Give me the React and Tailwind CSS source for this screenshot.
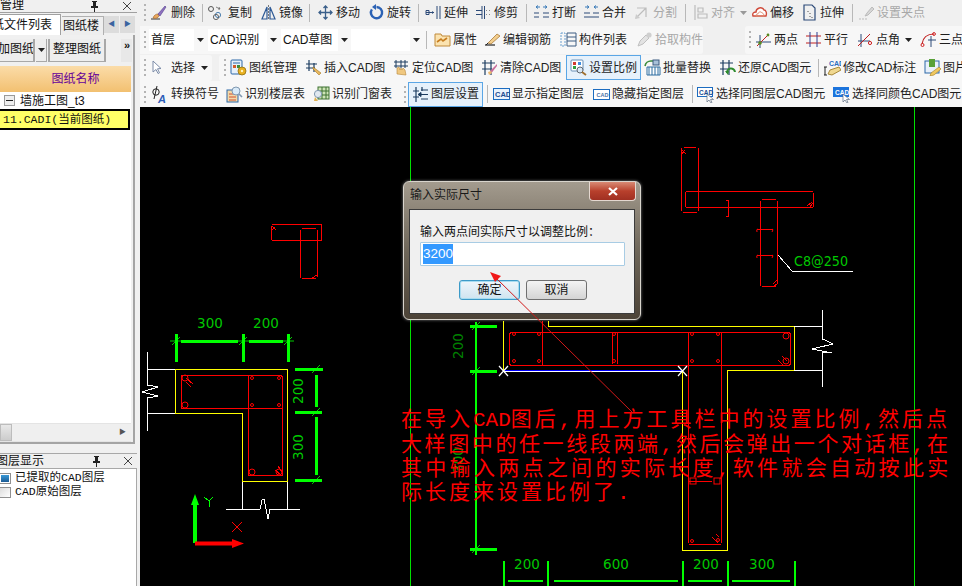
import React from "react";

const S = ({ children }) => (
  <svg width="17" height="17" viewBox="0 0 17 17" fill="none" className="shrink-0">{children}</svg>
);

const ICONS = {
  del: <S><path d="M1 15h9" stroke="#333" /><path d="M3 14c1-3 3-4 5-4l1 2c-1 2-3 3-6 2z" fill="#e8a860" stroke="#a06020" strokeWidth=".6" /><path d="M8 10l7-8 1 1-6 9z" fill="#8f6fc0" stroke="#50408a" strokeWidth=".6" /></S>,
  copy: <S><circle cx="4" cy="5" r="2.5" stroke="#555" /><circle cx="11" cy="11" r="2.6" stroke="#4a7fb0" /><circle cx="9" cy="13" r="2.6" stroke="#666" /><path d="M9 3l4 2M13 5l-2 0M13 5l-1-2" stroke="#666" strokeWidth=".8" /></S>,
  mirror: <S><path d="M7 3L2 15h5zM10 3l5 12h-5z" stroke="#2e5a96" strokeWidth="1.2" /><path d="M8.5 1v15" stroke="#777" strokeDasharray="2 1" /></S>,
  move: <S><path d="M8.5 2v13M2 8.5h13M6.5 4l2-2 2 2M6.5 13l2 2 2-2M4 6.5l-2 2 2 2M13 6.5l2 2-2 2" stroke="#3a5f8a" strokeWidth="1.3" /></S>,
  rotate: <S><path d="M8.5 3a5.6 5.6 0 1 1-4.600 2.400" stroke="#2c62b4" strokeWidth="2.400" /><path d="M8 0v6L4 3z" fill="#2c62b4" /></S>,
  extend: <S><path d="M1 8.5h8M1 6.5h3v4H1z" stroke="#2c4a78" /><path d="M12 2v13M15 2v13" stroke="#2c4a78" /><path d="M9 8.5l-2-1.500v3z" fill="#2c4a78" /></S>,
  trim: <S><path d="M7 2v13M9.5 2v13" stroke="#2c4a78" /><path d="M1 6.5h6M1 10.500h6" stroke="#2c4a78" /><path d="M11 6.5h1M14 6.5h1M11 10.500h1M14 10.500h1" stroke="#888" /></S>,
  breakI: <S><path d="M1 13h5M10 13h6M1 9h5M10 9h6" stroke="#2c4a78" /><path d="M3 3h4M3 3l2-1.500M3 3l2 1.500M14 3h-4M14 3l-2-1.500M14 3l-2 1.500" stroke="#3a7ab8" /></S>,
  merge: <S><path d="M1 13h15M1 9h6M10 9h6" stroke="#2c4a78" /><path d="M2 3h4M6 3L4 1.500M6 3L4 4.500M15 3h-4M11 3l2-1.500M11 3l2 1.500" stroke="#3a7ab8" /></S>,
  split: <S><path d="M2 14L12 4M3 4h9v9" stroke="#bdbdbd" strokeWidth="1.2" /><path d="M1 15l5-1-4-4z" fill="#ccc" /></S>,
  align: <S><path d="M3 1v15M6 4h5v4H6zM6 10h9v4H6z" stroke="#bcbcbc" strokeWidth="1.2" /></S>,
  offset: <S><path d="M2 12c-1-3 1-4 3-4 0-4 6-6 8-2 2 0 3 3 2 6z" stroke="#cf4a3a" strokeWidth="1.400" fill="#fff" /><path d="M5 12c0-2 1-2 2-2 0-2 3-3 4-1 1 0 2 1 2 3z" stroke="#e08a70" /></S>,
  stretch: <S><path d="M3 1h8l3 3v12H3z" stroke="#2c4a78" strokeWidth="1.2" /><path d="M7 7v1M9 9v1M9 12v1M11 13v1" stroke="#555" /></S>,
  grip: <S><path d="M1 15h8" stroke="#bbb" strokeDasharray="2 1" /><path d="M9 9l5-6 2 2-6 6-3 1z" fill="#d6d6d6" stroke="#bbb" /></S>,
  attr: <S><path d="M1 3h6l1 2h8v10H1z" fill="#fbe3b0" stroke="#c08a3a" /><path d="M3 11l4-3 2 2 4-3" stroke="#c77d20" strokeWidth="1.600" /></S>,
  rebar: <S><path d="M1 14h10" stroke="#222" strokeWidth="1.2" /><path d="M4 12L13 3l3 2-9 8z" fill="#f3ce8d" stroke="#a06e2a" strokeWidth=".7" /><path d="M2 14l2-2" stroke="#222" /></S>,
  list: <S><rect x="1" y="2" width="4" height="13" fill="none" stroke="#6aa0d0" strokeDasharray="2 1" /><path d="M7 2h9v13H7zM7 6h9M7 10h9" stroke="#3c5c82" /></S>,
  pick: <S><path d="M2 15l2-5 6-6 3 3-6 6z" fill="#e3e3e3" stroke="#c0c0c0" /><circle cx="13" cy="4" r="2.600" fill="#cfcfcf" /></S>,
  two: <S><path d="M1 11h15M5 4v13" stroke="#2c4a78" /><path d="M2 15L14 3" stroke="#c02020" /><circle cx="5" cy="12" r="1.800" fill="#5a8a20" /><circle cx="13" cy="4" r="1.400" fill="#5a8a20" /></S>,
  par: <S><path d="M1 5h15M1 12h15" stroke="#c02020" /><path d="M5 1v15M12 1v15" stroke="#2c3c90" /></S>,
  ang: <S><path d="M1 10h12M4 3v13" stroke="#2c4a78" /><path d="M1 15L13 3" stroke="#c02020" /><circle cx="13" cy="12" r="1.600" fill="none" stroke="#d02020" /></S>,
  three: <S><path d="M2 13C3 6 8 3 14 3" stroke="#c02020" strokeWidth="1.2" /><path d="M8 9h8M11 5v11" stroke="#2c4a78" /><circle cx="2.500" cy="14" r="1.500" stroke="#d02020" /><circle cx="14" cy="3" r="1.400" stroke="#d02020" /></S>,
  mgmt: <S><rect x="1" y="1" width="11" height="14" rx="1" fill="#e6f0fa" stroke="#2c68a8" /><path d="M3 4h7" stroke="#2c68a8" /><rect x="3" y="6" width="3" height="3" fill="#d25c2c" /><rect x="7" y="6" width="3" height="3" fill="#3c8c3c" /><circle cx="12" cy="12" r="4" fill="#e8b020" stroke="#907010" strokeWidth=".8" /><circle cx="12" cy="12" r="1.2" fill="#fff3c0" /></S>,
  ins: <S><path d="M4 1v11M9 4v9M1 5h11M1 9h9" stroke="#1c3c60" strokeWidth="1.2" /><path d="M8 8l8 6-2 2-6-6z" fill="#e8b860" stroke="#a87820" strokeWidth=".6" /></S>,
  loc: <S><path d="M3 1v8M8 1v8M12 1v8M1 3h14M1 7h14" stroke="#1c3c60" /><path d="M4 15V9l2-1 1 3 1-2 1 2 1-2 2 2 1 5z" fill="#f0c880" stroke="#b8883a" strokeWidth=".6" /></S>,
  clr: <S><path d="M4 1v15M10 1v15M1 4h13M1 10h10" stroke="#1c3c60" strokeWidth="1.2" /><path d="M16 5L9 12l1.500 2L16 7z" fill="#c86e9c" /><path d="M7 13l3-1 1 2-3 2z" fill="#eab870" /></S>,
  scale: <S><rect x="1" y="1" width="12" height="11" rx="1" fill="#fff" stroke="#6890b8" /><rect x="3" y="3" width="3" height="3" fill="#d23c30" /><rect x="8" y="3" width="3" height="3" fill="#3c8ce0" /><rect x="3" y="7" width="3" height="3" fill="#30a040" /><circle cx="10" cy="11" r="3" fill="#d8e8f6" stroke="#606870" /><path d="M12 13l4 3" stroke="#a07030" strokeWidth="1.800" /></S>,
  rep: <S><path d="M1 7a6 6 0 0 1 6-5h3" stroke="#3c8c3c" strokeWidth="1.600" /><path d="M3 8h13v8H3z" fill="#fff" stroke="#2c6ca0" /><path d="M5 8v8M8 8v8M11 8v8M14 8v8" stroke="#2c6ca0" /><rect x="9" y="1" width="6" height="5" fill="#a8c0d8" stroke="#3c5c82" /></S>,
  res: <S><path d="M4 1v15M10 1v15M1 4h13M1 10h10" stroke="#1c3c60" strokeWidth="1.2" /><path d="M8 14a4 4 0 0 1 8-1" stroke="#2e8c2e" strokeWidth="2" /><path d="M6 12l4 0-1 4z" fill="#2e8c2e" /></S>,
  mod: <S><text x="5" y="6.500" fontSize="7" fontWeight="700" fill="#2c6cc0" fontFamily="Liberation Sans">CAD</text><path d="M1 8v8M0 8h3M0 16h3" stroke="#222" /><path d="M4 15l2-4 9-3 2 3-9 5z" fill="#f0d890" stroke="#a88838" /></S>,
  img: <S><rect x="1" y="2" width="14" height="12" fill="#e8f0fa" stroke="#2c68a8" /><rect x="5" y="0" width="6" height="8" fill="#58a038" /><path d="M7 14l8-6 2 2-7 6-4 1z" fill="#f0c860" stroke="#a88020" strokeWidth=".6" /></S>,
  conv: <S><circle cx="6" cy="6" r="3.200" stroke="#222" /><path d="M7 0L4 13" stroke="#222" /><text x="8" y="16.500" fontSize="11" fontWeight="700" fontStyle="italic" fill="#2c5cb8" fontFamily="Liberation Sans">A</text></S>,
  floor: <S><rect x="1" y="4" width="11" height="12" fill="#f3d9a8" stroke="#2c68a8" /><path d="M3 8h7M3 11h7M3 14h7" stroke="#d05030" /><circle cx="10" cy="5" r="4" fill="#d8eaf8" stroke="#8098b0" /><path d="M13 8l3 3" stroke="#8098b0" strokeWidth="1.600" /></S>,
  door: <S><rect x="5" y="1" width="11" height="12" fill="#cfe5b8" stroke="#3c7030" /><path d="M5 5h11M5 9h11M9 1v12M13 1v12" stroke="#3c7030" /><circle cx="5" cy="8" r="3.600" fill="#e0e8f0" stroke="#8098b0" /><path d="M2 11l-1 4h4z" fill="#e0b050" /></S>,
  layer: <S><path d="M4 1v15M10 1v4M1 5h6M1 11h6" stroke="#1c3c60" strokeWidth="1.2" /><path d="M8 8.5h8M6 8.5l3-2v4z" fill="#1c3c60" stroke="#1c3c60" /><path d="M9 4h7M9 13h7" stroke="#1c3c60" /></S>,
  show: <S><rect x="0.500" y="2.500" width="16" height="11" fill="#e8f2fc" stroke="#1c6cc0" /><text x="2" y="11" fontSize="7.500" fontWeight="700" fill="#1c4c90" fontFamily="Liberation Sans">CAD</text></S>,
  hide: <S><rect x="0.500" y="3.500" width="16" height="10" fill="#fff" stroke="#1c6cc0" /><text x="3.500" y="10.500" fontSize="5.500" fontWeight="700" fill="#4c74a8" fontFamily="Liberation Sans">CAD</text></S>,
  same: <S><rect x="0.500" y="1.500" width="15" height="9" fill="#fff" stroke="#1c6cc0" /><text x="2" y="8.500" fontSize="6.500" fontWeight="700" fill="#1c4c90" fontFamily="Liberation Sans">CAD</text><path d="M10 8v8l2-2 2 3 1-.5-1.500-3h3z" fill="#fff" stroke="#5c6c80" strokeWidth=".7" /></S>,
  color: <S><rect x="0" y="1" width="16" height="10" fill="#1c74dc" /><text x="2" y="8.500" fontSize="6.500" fontWeight="700" fill="#fff" fontFamily="Liberation Sans">CAD</text><path d="M10 8v8l2-2 2 3 1-.5-1.500-3h3z" fill="#fff" stroke="#5c6c80" strokeWidth=".7" /></S>,
};

const Grip = () => (
  <div className="ml-[4px] w-[6px] h-[17px] flex flex-col justify-between shrink-0">
    <i className="block w-[2px] h-[2px] bg-[#b4b4b4]" />
    <i className="block w-[2px] h-[2px] bg-[#b4b4b4]" />
    <i className="block w-[2px] h-[2px] bg-[#b4b4b4]" />
    <i className="block w-[2px] h-[2px] bg-[#b4b4b4]" />
  </div>
);

const Sep = ({ w = "w-[5px]" }) => (
  <div className={`${w} h-[18px] shrink-0 flex`}>
    <i className="block w-px h-full bg-[#b8b8b8]" />
  </div>
);

const Caret = ({ c = "#222" }) => (
  <svg width="7" height="4" viewBox="0 0 7 4" className="shrink-0"><path d="M0 0h7L3.500 4z" fill={c} /></svg>
);

const Tool = ({ w, icon, label, gray, active, caret, wide }) => (
  <div className={`${w} shrink-0 h-full flex items-center`}>
    <div className={`flex items-center ${active ? "border border-[#5aa6e6] bg-[#e6f1fb] h-[25px] pl-[3px] pr-[3px] -ml-[4px]" : ""}`}>
      {ICONS[icon]}
      <span className={`${wide ? "ml-[4px]" : "ml-[2px]"} whitespace-nowrap ${gray ? "text-[#a8a8a8]" : "text-[#1e1e1e]"}`}>{label}</span>
      {caret && <span className="ml-[5px]"><Caret c={gray ? "#999" : "#222"} /></span>}
    </div>
  </div>
);

const Combo = ({ text, w, gap }) => (
  <div className={`flex items-center h-[22px] shrink-0 ${gap}`}>
    <div className={`${w} h-full bg-white pl-[2px] flex items-center whitespace-nowrap text-[#111]`}>{text}</div>
    <div className="w-[10px] h-full ml-[1px] flex items-center justify-center"><Caret /></div>
  </div>
);

const Pin = () => (
  <svg width="9" height="11" viewBox="0 0 9 11"><path d="M2 0h5v1H6v4h2v2H5v4H4V7H1V5h2V1H2z" fill="#222" /></svg>
);
const Close = () => (
  <svg width="8" height="8" viewBox="0 0 8 8"><path d="M0 0l8 8M8 0L0 8" stroke="#444" /></svg>
);

function LeftPanel() {
  return (
    <div className="w-[140px] h-[586px] shrink-0 bg-[#f0f0f0] flex flex-col overflow-hidden">
      <div className="w-[137px] h-[13px] flex items-center border-b border-[#a0a0a0] leading-[12px] text-[#111]">
        <span className="-mt-[2px]">管理</span>
        <div className="ml-auto mr-[24px] flex"><Pin /></div>
        <div className="mr-[6px] flex"><Close /></div>
      </div>
      <div className="h-[21px] mt-px flex items-end w-[137px]">
        <div className="w-[61px] h-[21px] bg-white border-t border-r border-[#a0a0a0] overflow-hidden leading-[20px] whitespace-nowrap text-[#111]">
          <span className="block -ml-[8px]">纸文件列表</span>
        </div>
        <div className="w-[42px] h-[19px] ml-px bg-[#eeeeee] border-t border-r border-[#b0b0b0] overflow-hidden leading-[18px] pl-px whitespace-nowrap text-[#111]">图纸楼</div>
        <div className="w-[15px] h-[17px] mb-[2px] bg-[#dcdcdc] flex items-center justify-center text-[7px] text-[#3a64a0]">◀</div>
        <div className="w-[15px] h-[17px] mb-[2px] ml-px bg-[#dcdcdc] flex items-center justify-center text-[7px] text-[#3a64a0]">▶</div>
      </div>
      <div className="w-[135px] h-[409px] border-r-2 border-b-2 border-[#a4a4a4] bg-[#f0f0f0] flex flex-col">
        <div className="h-[31px] shrink-0 flex items-start pt-[4px] pr-px">
          <div className="w-[35px] h-[23px] bg-[#eeeeee] border-r-2 border-b border-[#a8a8a8] overflow-hidden leading-[21px] whitespace-nowrap text-[#111]"><span className="block -ml-[2px]">加图纸</span></div>
          <div className="w-[11px] h-[23px] ml-px bg-[#eeeeee] border-r border-b border-[#a8a8a8] flex items-center justify-center"><Caret /></div>
          <div className="w-[58px] h-[23px] ml-px bg-[#eeeeee] border-x-2 border-b border-[#a8a8a8] text-center leading-[21px] whitespace-nowrap text-[#111]">整理图纸</div>
          <div className="w-[11px] h-[23px] ml-[15px] bg-[#e8e8e8] flex justify-center text-[11px] leading-[12px] font-bold tracking-[-1px] text-[#111]">»</div>
        </div>
        <div className="flex-1 bg-white flex flex-col mr-[2px]">
          <div className="h-[26px] shrink-0 bg-gradient-to-b from-[#fbdca8] to-[#f2c070] flex items-center justify-center text-[#660099] text-[12px] pl-[20px]">图纸名称</div>
          <div className="h-[17px] shrink-0 flex items-center whitespace-nowrap">
            <div className="w-[11px] h-[11px] ml-[4px] border border-[#9a9a9a] bg-[#eeeeee] flex items-center justify-center"><i className="block w-[7px] h-px bg-[#222]" /></div>
            <span className="ml-[5px] text-[#111]">墙施工图_t3</span>
          </div>
          <div className="h-[21px] shrink-0 w-[130px] border-y-2 border-r-2 border-black bg-[#ffff66] pl-[3px] flex items-center whitespace-nowrap text-[11.500px] text-[#111] [font-family:'Liberation_Mono','Noto_Sans_CJK_SC',monospace]">11.CADI(当前图纸)</div>
          <div className="flex-1" />
          <div className="h-[19px] shrink-0 bg-[#efefef] border-y border-[#e4e4e4] flex items-center">
            <div className="w-[12px] h-full bg-gradient-to-b from-[#e8e8e8] to-[#cccccc] border border-[#bcbcbc]" />
            <div className="ml-auto mr-[5px] text-[7px] text-[#555]">▶</div>
          </div>
        </div>
      </div>
      <div className="h-[9px]" />
      <div className="w-[137px] h-[16px] flex items-center overflow-hidden whitespace-nowrap border-y border-[#a8a8a8] bg-[#efefef] text-[#111]">
        <span className="block -ml-[4px]">图层显示</span>
        <div className="ml-auto mr-[23px] flex"><Pin /></div>
        <div className="mr-[5px] flex"><Close /></div>
      </div>
      <div className="w-[137px] flex-1 bg-white border-r border-[#a8a8a8] pt-[2px] text-[#111] text-[11.500px] leading-[14px] [font-family:'Liberation_Mono','Noto_Sans_CJK_SC',monospace]">
        <div className="h-[14px] flex items-center whitespace-nowrap">
          <div className="w-[12px] h-[11px] border border-[#909090] bg-white p-[1px] -ml-px"><div className="h-full bg-gradient-to-b from-[#3a9ad8] to-[#1c5c94]" /></div>
          <span className="ml-[4px]">已提取的CAD图层</span>
        </div>
        <div className="h-[14px] flex items-center whitespace-nowrap">
          <div className="w-[12px] h-[11px] border border-[#909090] bg-gradient-to-br from-[#dddddd] to-white -ml-px" />
          <span className="ml-[4px]">CAD原始图层</span>
        </div>
      </div>
    </div>
  );
}

function Toolbar() {
  return (
    <div className="h-[107px] flex flex-col overflow-hidden bg-[#f0f0f0]">
      <div className="h-[25px] flex items-center shrink-0 overflow-hidden">
        <Grip />
        <Tool w="w-[52px]" icon="del" label="删除" wide />
        <Sep />
        <Tool w="w-[53px]" icon="copy" label="复制" wide />
        <Tool w="w-[49px]" icon="mirror" label="镜像" />
        <Sep w="w-[8px]" />
        <Tool w="w-[51px]" icon="move" label="移动" />
        <Tool w="w-[50px]" icon="rotate" label="旋转" />
        <Sep w="w-[7px]" />
        <Tool w="w-[50px]" icon="extend" label="延伸" />
        <Tool w="w-[51px]" icon="trim" label="修剪" />
        <Sep w="w-[7px]" />
        <Tool w="w-[50px]" icon="breakI" label="打断" />
        <Tool w="w-[51px]" icon="merge" label="合并" />
        <Tool w="w-[51px]" icon="split" label="分割" gray />
        <Sep w="w-[7px]" />
        <Tool w="w-[59px]" icon="align" label="对齐" gray caret />
        <Tool w="w-[50px]" icon="offset" label="偏移" />
        <Tool w="w-[51px]" icon="stretch" label="拉伸" />
        <Sep w="w-[6px]" />
        <Tool w="w-[72px]" icon="grip" label="设置夹点" gray />
      </div>
      <div className="h-[29px] flex items-center shrink-0 overflow-hidden">
        <div className="w-[563px] h-[28px] bg-[#f7f7f7] rounded-r-[3px] flex items-center shrink-0">
          <Grip />
          <Combo text="首层" w="w-[45px]" gap="mr-[3px] -ml-px" />
          <Combo text="CAD识别" w="w-[59px]" gap="mr-[3px]" />
          <Combo text="CAD草图" w="w-[57px]" gap="mr-[2px]" />
          <Combo text="" w="w-[59px]" gap="mr-[5px]" />
          <Sep w="w-[8px]" />
          <Tool w="w-[50px]" icon="attr" label="属性" />
          <Tool w="w-[76px]" icon="rebar" label="编辑钢筋" />
          <Tool w="w-[76px]" icon="list" label="构件列表" />
          <Tool w="w-[64px]" icon="pick" label="拾取构件" gray />
        </div>
        <div className="w-[42px] shrink-0" />
        <div className="flex-1 h-[28px] bg-[#f7f7f7] rounded-l-[3px] flex items-center overflow-hidden">
          <Grip />
          <Tool w="w-[50px]" icon="two" label="两点" />
          <Tool w="w-[52px]" icon="par" label="平行" />
          <Tool w="w-[63px]" icon="ang" label="点角" caret />
          <Tool w="w-[60px]" icon="three" label="三点" />
        </div>
      </div>
      <div className="h-[27px] flex items-center shrink-0 overflow-hidden">
        <div className="w-[72px] h-[26px] bg-[#f7f7f7] rounded-r-[3px] flex items-center shrink-0">
          <Grip />
          <div className="w-[19px] flex"><S><path d="M3 2v11l3-2.500 2 4 1.500-.7-2-4 3.500-.3z" fill="#fff" stroke="#7c8ca8" /></S></div>
          <span className="text-[#1e1e1e] ml-[2px]">选择</span>
          <span className="ml-[6px]"><Caret /></span>
        </div>
        <div className="w-[7px] shrink-0" />
        <div className="flex-1 h-[26px] bg-[#f7f7f7] rounded-l-[3px] flex items-center overflow-hidden">
          <div className="ml-px flex"><Grip /></div>
          <Tool w="w-[75px]" icon="mgmt" label="图纸管理" />
          <Tool w="w-[88px]" icon="ins" label="插入CAD图" />
          <Tool w="w-[88px]" icon="loc" label="定位CAD图" />
          <Tool w="w-[89px]" icon="clr" label="清除CAD图" />
          <Tool w="w-[74px]" icon="scale" label="设置比例" active />
          <Tool w="w-[75px]" icon="rep" label="批量替换" />
          <Tool w="w-[99px]" icon="res" label="还原CAD图元" />
          <Sep w="w-[6px]" />
          <Tool w="w-[100px]" icon="mod" label="修改CAD标注" />
          <Tool w="w-[40px]" icon="img" label="图片" />
        </div>
      </div>
      <div className="h-[26px] bg-[#f7f7f7] flex items-center shrink-0 overflow-hidden">
        <Grip />
        <Tool w="w-[76px]" icon="conv" label="转换符号" wide />
        <Tool w="w-[87px]" icon="floor" label="识别楼层表" />
        <Tool w="w-[87px]" icon="door" label="识别门窗表" />
        <Grip />
        <div className="w-[2px] shrink-0" />
        <Tool w="w-[75px]" icon="layer" label="图层设置" active />
        <Sep w="w-[6px]" />
        <Tool w="w-[100px]" icon="show" label="显示指定图层" />
        <Tool w="w-[99px]" icon="hide" label="隐藏指定图层" />
        <Sep w="w-[5px]" />
        <Tool w="w-[136px]" icon="same" label="选择同图层CAD图元" />
        <Tool w="w-[130px]" icon="color" label="选择同颜色CAD图元" />
      </div>
    </div>
  );
}

const R = "#ff0000", Y = "#ffff00", W = "#ffffff", G = "#00ff00", T = "#00c800";

const Poly = ({ c, p, w = 1 }) => <polyline points={p} stroke={c} strokeWidth={w} fill="none" shapeRendering="crispEdges" />;
const L = ({ c, a, w = 1 }) => <path d={a} stroke={c} strokeWidth={w} fill="none" shapeRendering="crispEdges" />;
const Dim = ({ x, y, t, r, c = T }) => (
  <text x={x} y={y} fill={c} fontSize="13.500" textAnchor="middle" fontFamily="'DejaVu Sans',sans-serif"
    transform={r ? `rotate(-90 ${x} ${y})` : undefined}>{t}</text>
);
const Tick = ({ x, y }) => <path d={`M${x - 4} ${y + 4}L${x + 4} ${y - 4}M${x - 6} ${y}h12`} stroke={G} strokeWidth=".8" />;

const NOTE = [
  { y: 426, s: 3, parts: ["在导入", "CAD", "图后,用上方工具栏中的设置比例,然后点"] },
  { y: 451, s: 2.6, parts: ["大样图中的任一线段两端,然后会弹出一个对话框,在"] },
  { y: 475, s: 3.3, parts: ["其中输入两点之间的实际长度,软件就会自动按此实"] },
  { y: 499, s: 3, parts: ["际长度来设置比例了."] },
];

function Drawing() {
  return (
    <svg viewBox="140 107 822 479" width="822" height="479" className="block">
      <L c="#00e000" a="M410.500 107V586M914.500 107V586" />

      {/* top-left small L */}
      <L c={R} a="M272 224.500H321.500V240.500H272M271.500 226V240M300.500 230V278M317.500 230V277M302 228.500H316M302 278.500H316" />
      <L c={R} a="M272 226l4 4M272 230l3-3M312 278l5-3" />

      {/* left detail */}
      <L c={G} w={3} a="M176 334V362M243 334V362M288 334V362" />
      <L c={G} w={3} a="M181 341H238M249 341H283" />
      <Tick x={176} y={341} /><Tick x={243} y={341} /><Tick x={288} y={341} />
      <Dim x={210} y={328} t="300" />
      <Dim x={266} y={328} t="200" />
      <Poly c={Y} p="175.500,413 175.500,369.500 287.500,369.500 287.500,481.500 242.500,481.500 242.500,413.500 175,413.500" />
      <Poly c={W} p="147.500,352 147.500,385 158,387 142,392 158,396 147.500,398 147.500,431" />
      <L c={W} a="M147 369.500H175M147 413.500H175M242.500 482V509M287.500 482V509" />
      <Poly c={W} p="226,509.500 260,509.500 262,500 264,499 268,519 270,509.500 300,509.500" />
      <Poly c={R} p="182,375.500 281,375.500 282.500,377 282.500,475 281,475.500 249,475.500 248.500,475 248.500,408.500 182,408.500 181.500,407 181.500,377 182,375.500" />
      <L c={R} a="M248.500 375V408H282" />
      {[[185, 378], [185, 405], [252, 378], [279, 378], [252, 405], [279, 405], [252, 472], [279, 472]].map(([x, y], i) => (
        <circle key={i} cx={x} cy={y} r={i < 2 || i > 5 ? 3 : 1.500} stroke={R} fill="none" />
      ))}
      <L c={R} a="M186 378l7 6M186 382l5 5M275 470l6 5M278 466l4 6" />
      <L c={G} w={3} a="M295 369H323M295 412H322M295 480H322M316 375V407M316 417V475" />
      <Tick x={316} y={369} /><Tick x={316} y={412} /><Tick x={316} y={480} />
      <Dim x={303} y={391} t="200" r />
      <Dim x={303} y={447} t="300" r />

      {/* axis */}
      <path d="M193 499h4v44h-4zM195 494l4 11h-8z" fill={G} />
      <path d="M195 541.500h40v4h-40zM244 543.500l-12 4.500v-9z" fill={R} />
      <L c={G} a="M204 497l5 4 4-4M209 501v6" />
      <L c={R} a="M232 522l10 10M242 522l-10 10" />

      {/* top-right detail */}
      <L c={R} a="M681.500 148V211M698.500 148V211M684 147.500H696M683 212.500H697M686 191.500H813M686 207.500H813M685.500 192V207M813.500 193V207M760.500 201V286M777.500 201V284M762 199.500H776M762 286.500H776" />
      <L c={R} a="M682 150l4 4M682 154l3-4M807 206l5-4M810 207l3-4M773 284l4-4M774 286l3-2M726 200h2.500v16H726M757 229.500h16M757 255.500h16" />
      <path d="M757 232q-1-3 1-3M772 232q2-3 0-3M757 258q-1-3 1-3M772 258q2-3 0-3" stroke={R} fill="none" />
      <Poly c={W} p="778,255 792,271 853,271" />
      <text x="794" y="266" fill={T} fontSize="14.500" fontFamily="'DejaVu Sans',sans-serif" textLength="54" lengthAdjust="spacingAndGlyphs">C8@250</text>

      {/* main T */}
      <Poly c={Y} p="548.500,321 548.500,326.500 794.500,326.500 794.500,370.500 727.500,370.500 727.500,550.500 682.500,550.500 682.500,372" />
      <L c={Y} a="M503.500 321V370" />
      <Poly c={R} p="511,332.500 789,332.500 790.500,334 790.500,364 789,365.500 511,365.500 509.500,364 509.500,334 511,332.500" />
      <L c={R} a="M542.500 321V365M688.500 332V543M721.500 332V543M689 544.500H721M617.500 333V364M612.500 333V364" />
      <circle cx="786" cy="336" r="3" stroke={R} fill="none" />
      <circle cx="786" cy="361" r="3" stroke={R} fill="none" />
      <L c={R} a="M778 360l6 6M782 356l5 5M712 537l6 6M716 534l3 3" />
      {[[514, 334], [514, 361], [539, 334], [539, 361], [692, 334], [692, 361], [718, 334], [718, 361], [692, 541], [718, 540], [614, 334], [614, 361]].map(([x, y], i) => (
        <circle key={i} cx={x} cy={y} r="1.500" stroke={R} fill="none" />
      ))}
      <rect x="690" y="478" width="6" height="6" stroke={R} fill="none" />
      <rect x="714" y="478" width="6" height="6" stroke={R} fill="none" />
      <L c={R} a="M689 481.500H712" />
      <L c={W} a="M503 371.500H683" />
      <L c="#0000ff" a="M505 370.500H681" />
      <path d="M499 366l9 10M508 366l-9 10M678 366l9 10M687 366l-9 10" stroke={W} strokeWidth="1.200" />
      <L c={W} a="M794 326.500H822M794 370.500H822M822.500 310V339M822.500 352V387" />
      <Poly c={W} p="822.500,339 833,344 812,349 832,353 822.500,352" />
      <L c={G} w={3} a="M470 326H497M470 371H497M470 549H497" />
      <L c={G} w={2} a="M476 322V555" />
      <Tick x={476} y={326} /><Tick x={476} y={371} /><Tick x={476} y={549} />
      <Dim x={463} y={346} t="200" r c="#008000" />
      <Dim x={463} y={460} t="300" r c="#00a000" />
      <L c={G} w={2} a="M503.500 561V586M548 561V586M682.500 561V586M727.500 561V586M795 561V586" />
      <L c={G} w={2} a="M508 581H543M554 581H678M688 581H722M732 581H790" />
      <Dim x={527} y={569} t="200" />
      <Dim x={616} y={569} t="600" />
      <Dim x={706} y={569} t="200" />
      <Dim x={762} y={569} t="300" />

      {NOTE.map(({ y, s, parts }) => (
        <text key={y} x="401" y={y} fill={R} fontSize="21" fontFamily="'Liberation Mono','Noto Sans CJK SC',monospace">
          {parts.map((t, i) => (
            <tspan key={i} letterSpacing={t === "CAD" ? 0 : s}>{t}</tspan>
          ))}
        </text>
      ))}
    </svg>
  );
}

function Dialog() {
  return (
    <div className="absolute left-[263px] top-[74px] w-[238px] h-[139px] rounded-[6px] border border-[#d8d4cc] bg-gradient-to-b from-[#a39b8e] via-[#6f675a] to-[#4c4337] flex flex-col shadow-[0_0_3px_rgba(255,255,255,0.500)]">
      <div className="h-[27px] flex justify-between">
        <span className="ml-[6px] mt-[4px] text-[12px] text-[#1a1a1a] leading-[18px]">输入实际尺寸</span>
        <div className="mr-[4px] w-[47px] h-[19px] rounded-b-[4px] border border-[#e4d8d0] border-t-0 bg-gradient-to-b from-[#d88a74] via-[#b8402c] to-[#a03022] flex items-center justify-center">
          <svg width="10" height="9" viewBox="0 0 10 9"><path d="M1 1l8 7M9 1L1 8" stroke="#fff" strokeWidth="2.200" /></svg>
        </div>
      </div>
      <div className="mx-[5px] h-[105px] bg-[#f0f0f0] border border-[#3c3c3c] flex flex-col">
        <div className="ml-[10px] mt-[12px] text-[12px] leading-[20px] text-[#111] whitespace-nowrap">输入两点间实际尺寸以调整比例：</div>
        <div className="ml-[10px] w-[205px] h-[24px] bg-white border border-[#a8cce4] rounded-[1px] flex items-center pl-[2px] text-[13.500px]">
          <span className="bg-[#3399ff] text-white leading-[20px]">3200</span>
        </div>
        <div className="ml-[49px] mt-[14px] flex gap-[6px] text-[12px] text-[#111]">
          <div className="w-[61px] h-[20px] rounded-[3px] border border-[#3c9ac8] bg-gradient-to-b from-[#eef6fb] to-[#cfe4f0] shadow-[inset_0_0_0_1px_#a8dcf0] flex items-center justify-center">确定</div>
          <div className="w-[61px] h-[20px] rounded-[3px] border border-[#707070] bg-gradient-to-b from-[#f4f4f4] to-[#d4d4d4] flex items-center justify-center">取消</div>
        </div>
      </div>
    </div>
  );
}

export default function App() {
  return (
    <div className="w-[962px] h-[586px] overflow-hidden flex bg-[#f0f0f0] text-[12px] [font-family:'Liberation_Sans','Noto_Sans_CJK_SC',sans-serif]">
      <LeftPanel />
      <div className="flex-1 min-w-0 flex flex-col">
        <Toolbar />
        <div className="relative flex-1 bg-black overflow-hidden">
          <Drawing />
          <Dialog />
          <svg viewBox="140 107 822 479" width="822" height="479" className="absolute inset-0 pointer-events-none">
            <path d="M495 277L633 413" stroke="#d01818" strokeWidth="1" />
            <path d="M490 272l11 4-6 6z" fill="#f01818" />
          </svg>
        </div>
      </div>
    </div>
  );
}
